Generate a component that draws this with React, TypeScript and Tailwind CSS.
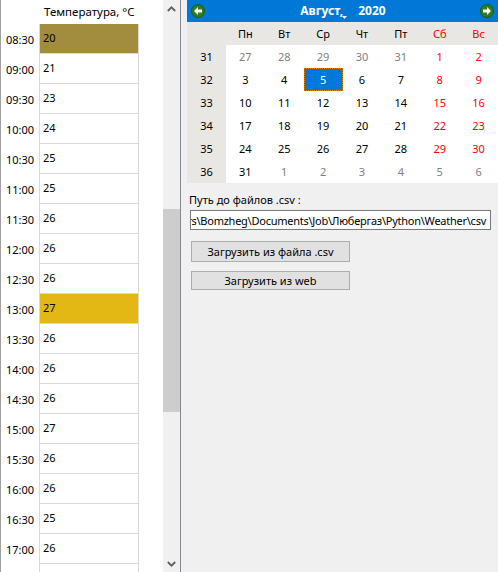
import React from "react";

const rows: [string, string, string?][] = [
  ["08:30", "20", "bg-[#a28d3e]"],
  ["09:00", "21"],
  ["09:30", "23"],
  ["10:00", "24"],
  ["10:30", "25"],
  ["11:00", "25"],
  ["11:30", "26"],
  ["12:00", "26"],
  ["12:30", "26"],
  ["13:00", "27", "bg-[#e3b714]"],
  ["13:30", "26"],
  ["14:00", "26"],
  ["14:30", "26"],
  ["15:00", "27"],
  ["15:30", "26"],
  ["16:00", "26"],
  ["16:30", "25"],
  ["17:00", "26"],
  ["", ""],
];

const head = ["Пн", "Вт", "Ср", "Чт", "Пт", "Сб", "Вс"];
const weeks: [string, string[]][] = [
  ["31", ["27", "28", "29", "30", "31", "1", "2"]],
  ["32", ["3", "4", "5", "6", "7", "8", "9"]],
  ["33", ["10", "11", "12", "13", "14", "15", "16"]],
  ["34", ["17", "18", "19", "20", "21", "22", "23"]],
  ["35", ["24", "25", "26", "27", "28", "29", "30"]],
  ["36", ["31", "1", "2", "3", "4", "5", "6"]],
];

function Arrow({ flip }: { flip?: boolean }) {
  return (
    <svg width="14" height="14" viewBox="0 0 14 14" className={flip ? "rotate-180" : ""}>
      <circle cx="7" cy="7" r="6.5" fill="#2f7d1f" stroke="#1d5a14" />
      <path d="M3 7 L7 3 V5.5 H11 V8.5 H7 V11 Z" fill="#ffffff" />
    </svg>
  );
}

function cellColor(w: number, d: number) {
  const other = (w === 0 && d < 5) || (w === 5 && d > 0);
  if (other) return "text-[#808080]";
  if (d >= 5) return "text-[#ff0000]";
  return "text-black";
}

export default function App() {
  return (
    <div
      className="flex w-[498px] h-[572px] overflow-hidden bg-[#f0f0f0] text-black text-[11px] leading-none"
      style={{ fontFamily: '"Noto Sans", sans-serif' }}
    >
      <div className="flex w-[181px] h-[572px] shrink-0 bg-white border-l border-r border-[#828790] border-l-[#a0a0a0]">
        <div className="w-[38px] shrink-0 flex flex-col">
          <div className="h-[24px] shrink-0" />
          {rows.map((r, i) => (
            <div key={i} className="h-[30px] shrink-0 flex items-center justify-center">
              {r[0]}
            </div>
          ))}
        </div>
        <div className="w-[100px] shrink-0 flex flex-col">
          <div className="h-[24px] shrink-0 flex items-center pl-[5px] text-[11.5px]">Температура, °C</div>
          {rows.map((r, i) => (
            <div
              key={i}
              className={`h-[30px] shrink-0 flex items-center pl-[3px] pb-[2px] border-l border-r border-b border-[#d9d9d9] ${r[2] ?? "bg-white"}`}
            >
              {r[1]}
            </div>
          ))}
        </div>
        <div className="flex-1" />
        <div className="w-[17px] shrink-0 flex flex-col items-stretch bg-[#f0f0f0]">
          <div className="h-[17px] shrink-0 flex items-center justify-center">
            <svg width="9" height="6" viewBox="0 0 9 6"><path d="M0.8 5 L4.5 1.3 L8.2 5" fill="none" stroke="#606060" strokeWidth="1.8" /></svg>
          </div>
          <div className="h-[192px] shrink-0" />
          <div className="h-[203px] shrink-0 bg-[#cdcdcd]" />
          <div className="flex-1" />
          <div className="h-[17px] shrink-0 flex items-center justify-center">
            <svg width="9" height="6" viewBox="0 0 9 6"><path d="M0.8 1 L4.5 4.7 L8.2 1" fill="none" stroke="#606060" strokeWidth="1.8" /></svg>
          </div>
        </div>
      </div>

      <div className="flex-1 flex flex-col pl-[6px] min-w-0">
        <div className="w-[311px] flex flex-col">
          <div className="h-[22px] bg-[#0078d7] flex items-center justify-between px-[4px] text-white">
            <Arrow />
            <div className="flex items-center font-bold text-[12px] pl-[1px]">
              <span className="relative">
                Август,
                <svg width="5" height="3" viewBox="0 0 5 3" className="absolute right-[-4px] bottom-[-2px]"><path d="M0 0H5L2.5 3Z" fill="#fff" /></svg>
              </span>
              <span className="ml-[15px]">2020</span>
            </div>
            <Arrow flip />
          </div>
          <div className="flex h-[23px] bg-[#e9e7e3]">
            <div className="w-[39px]" />
            {head.map((h, i) => (
              <div key={h} className={`w-[39px] flex items-center justify-center ${i >= 5 ? "text-[#ff0000]" : ""}`}>{h}</div>
            ))}
          </div>
          {weeks.map(([n, days], w) => (
            <div key={n} className="flex h-[23px]">
              <div className="w-[39px] bg-[#e9e7e3] flex items-center justify-center">{n}</div>
              {days.map((d, i) => {
                const sel = w === 1 && i === 2;
                return (
                  <div
                    key={i}
                    className={`w-[39px] flex items-center justify-center ${
                      sel
                        ? "bg-[#0078d7] text-white border border-dotted border-[#e07b00]"
                        : `bg-white ${cellColor(w, i)}`
                    }`}
                  >
                    {d}
                  </div>
                );
              })}
            </div>
          ))}
        </div>

        <div className="mt-[10px] ml-[2px] h-[12px] flex items-center">Путь до файлов .csv :</div>
        <div className="mt-[5px] ml-[3px] w-[301px] h-[20px] bg-white border border-[#7a7a7a] overflow-hidden flex items-center justify-end pr-[4px] whitespace-nowrap">
          <span className="shrink-0 tracking-[-0.25px]">C:\Users\Bomzheg\Documents\Job\Любергаз\Python\Weather\csv</span>
        </div>
        <button className="mt-[11px] ml-[4px] w-[159px] h-[21px] bg-[#e1e1e1] border border-[#adadad] flex items-center justify-center">Загрузить из файла .csv</button>
        <button className="mt-[9px] ml-[4px] w-[159px] h-[19px] bg-[#e1e1e1] border border-[#adadad] flex items-center justify-center">Загрузить из web</button>
      </div>
    </div>
  );
}
